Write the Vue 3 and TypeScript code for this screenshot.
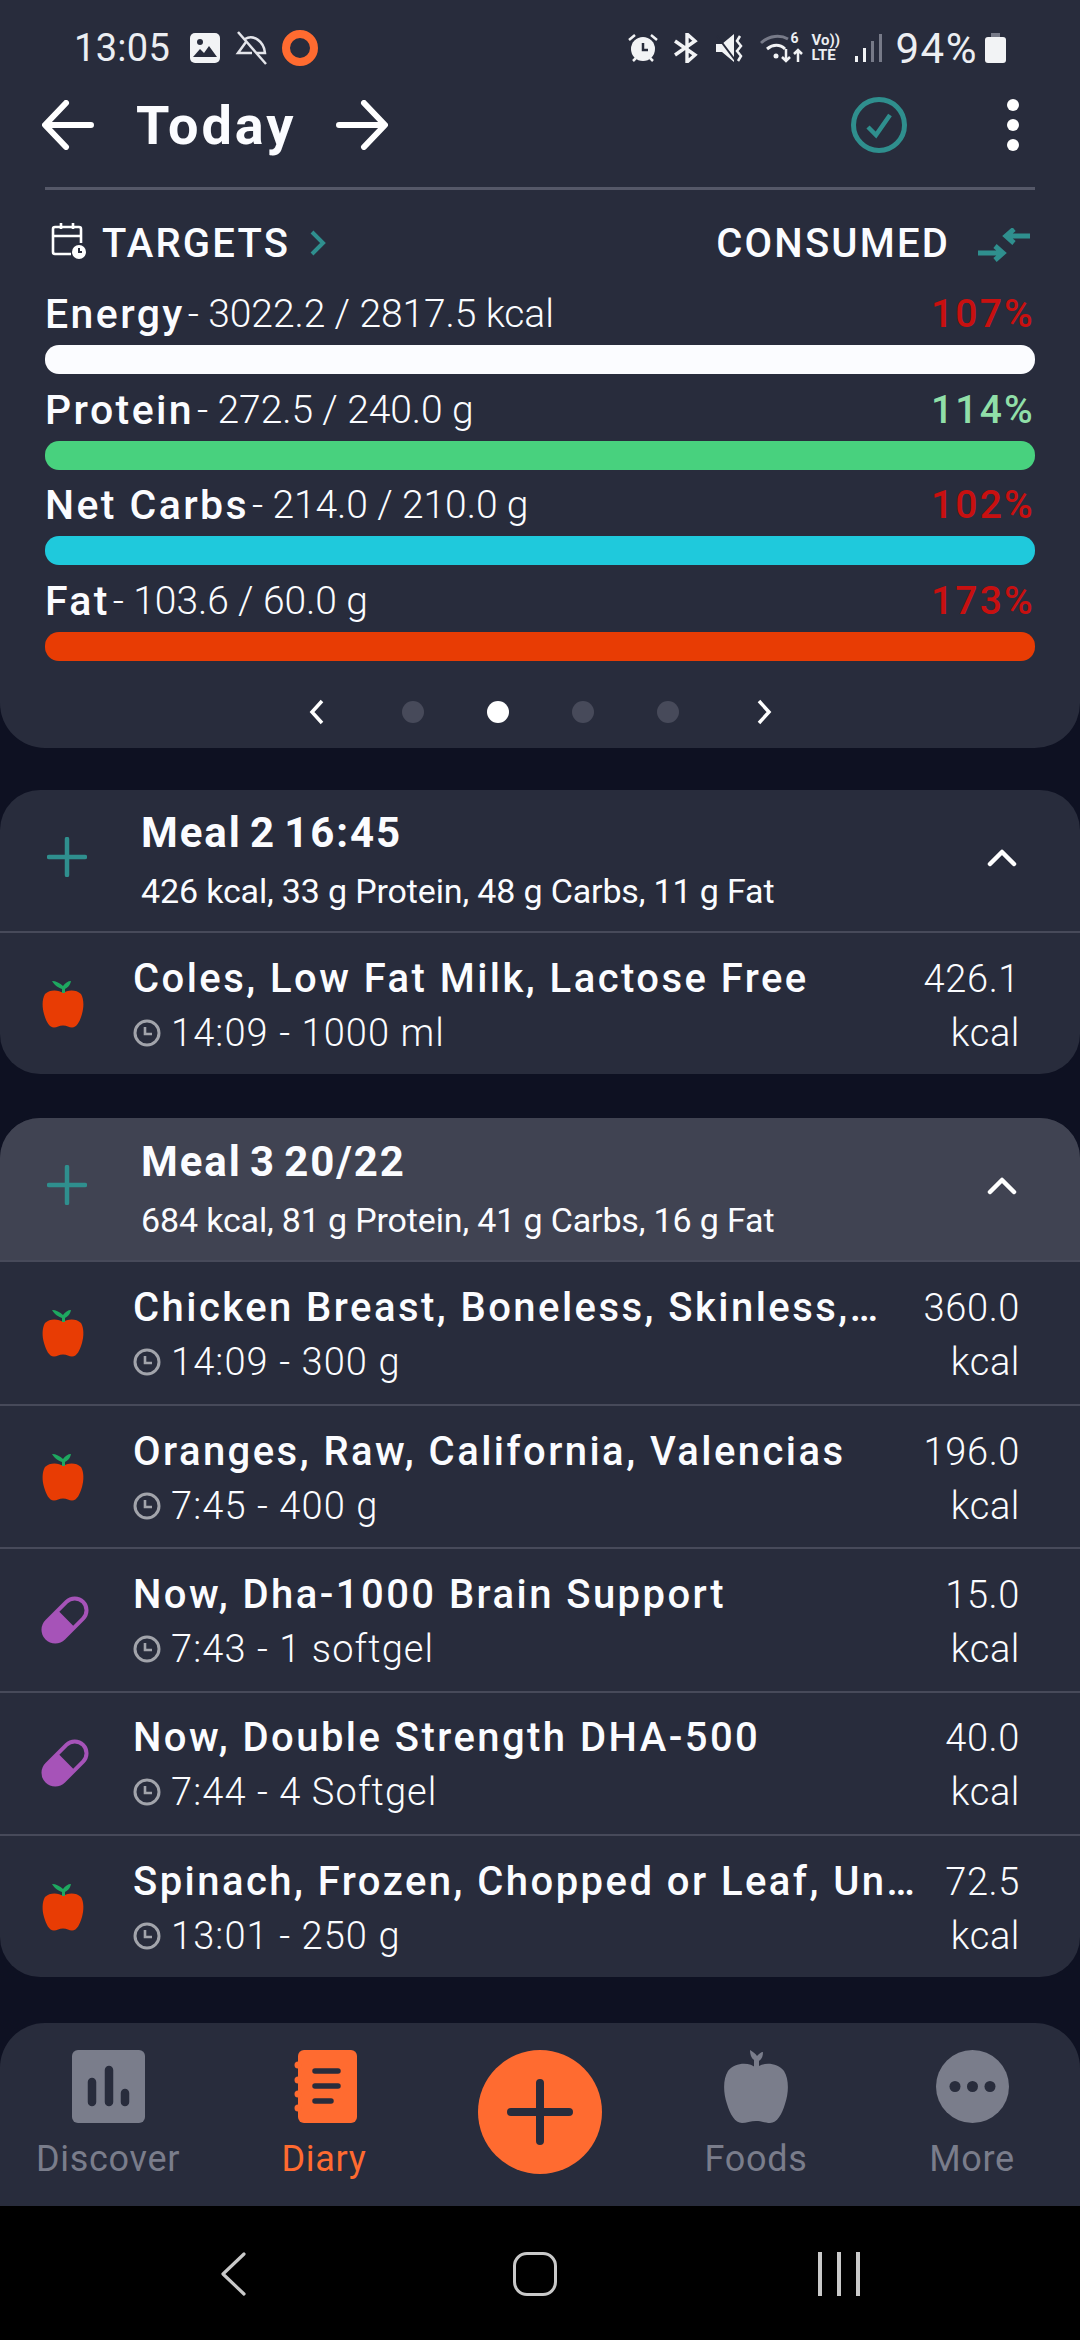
<template>
  <div class="screen">
    <section class="panel">
      <div class="status">
        <span class="time">13:05</span>
        <svg class="st-img" viewBox="0 0 30 30"><rect width="30" height="30" rx="5" fill="#f2f3f5"/><circle cx="10" cy="9" r="3" fill="#282c3c"/><path d="M3 24l7-8 4 4 5-7 8 11z" fill="#282c3c"/></svg>
        <svg class="st-bell" viewBox="0 0 34 34" fill="none" stroke="#e4e5ea" stroke-width="2.5"><path d="M3 1l28 32"/><path d="M10 8c8-5 19 2 20 14l-8 0M17 22H3l8-11"/></svg>
        <span class="ring"></span>
        <span class="grow"></span>
        <svg class="st-alarm" viewBox="0 0 30 30"><circle cx="15" cy="16" r="12" fill="#f2f3f5"/><path d="M1 7l6-5M29 7l-6-5M5 28l3-3M25 28l-3-3" stroke="#f2f3f5" stroke-width="2.5"/><path d="M15 10v7h5" stroke="#282c3c" stroke-width="2.5" fill="none"/></svg>
        <svg class="st-bt" viewBox="0 0 27 30" fill="none" stroke="#f2f3f5" stroke-width="3.4"><path d="M2 8l20 14-8 7V1l8 7L2 22"/></svg>
        <svg class="st-mute" viewBox="0 0 30 30"><path d="M1 11h6L19 1v28L7 19H1z" fill="#f2f3f5"/><path d="M2 3l18 24" stroke="#282c3c" stroke-width="2"/><path d="M25 3l-3 5 4 5-4 5 4 5-3 5" stroke="#f2f3f5" stroke-width="2.5" fill="none"/></svg>
        <svg class="st-wifi" viewBox="0 0 45 32" fill="none"><path d="M1 11c8-8 20-8 27-4" stroke="#777a88" stroke-width="3"/><path d="M7 17c6-5 13-5 18 0" stroke="#f2f3f5" stroke-width="3"/><circle cx="16" cy="24" r="2.5" fill="#f2f3f5"/><path d="M26 17v12m-4-4l4 4 4-4M38 30V18m-4 4l4-4 4 4" stroke="#f2f3f5" stroke-width="2.5"/></svg>
        <span class="wifi-six">6</span>
        <span class="volte"><span>Vo))</span><span>LTE</span></span>
        <svg class="st-signal" viewBox="0 0 27 30"><rect x="0" y="23" width="3" height="6" fill="#f2f3f5"/><rect x="8" y="15" width="3" height="14" fill="#f2f3f5"/><rect x="16" y="8" width="3" height="21" fill="#777a88"/><rect x="24" y="1" width="3" height="28" fill="#777a88"/></svg>
        <span class="batt-text">94%</span>
        <svg class="st-batt" viewBox="0 0 21 30"><rect x="6" y="0" width="9" height="4" fill="#777a88"/><rect x="0" y="4" width="21" height="26" rx="3" fill="#f2f3f5"/></svg>
      </div>

      <div class="toolbar">
        <svg class="arrow" viewBox="0 0 52 50" fill="none" stroke="#fff" stroke-width="6" stroke-linecap="round" stroke-linejoin="round"><path d="M49 25H4M24 3L3 25l21 22"/></svg>
        <span class="today">Today</span>
        <svg class="arrow arrow-r" viewBox="0 0 52 50" fill="none" stroke="#fff" stroke-width="6" stroke-linecap="round" stroke-linejoin="round"><path d="M3 25h45M28 3l21 22-21 22"/></svg>
        <span class="grow"></span>
        <svg class="check" viewBox="0 0 56 56" fill="none" stroke="#2f8f8e"><circle cx="28" cy="28" r="25.5" stroke-width="5"/><path d="M17 30l8 8 14-20" stroke-width="4.5"/></svg>
        <span class="kebab"><i></i><i></i><i></i></span>
      </div>
      <div class="rule"></div>

      <div class="target-row">
        <svg class="cal" viewBox="0 0 36 38" fill="none" stroke="#fff" stroke-width="2.6"><path d="M20 32H4a2 2 0 0 1-2-2V7a2 2 0 0 1 2-2h24a2 2 0 0 1 2 2v14M2 14h28M10 1v6M22 1v6"/><circle cx="28" cy="30" r="7" fill="#fff" stroke="none"/><path d="M28 26v4h3" stroke="#282c3c" stroke-width="2"/></svg>
        <span class="target-label">TARGETS</span>
        <svg class="target-chev" viewBox="0 0 17 26" fill="none" stroke="#2f8f8e" stroke-width="4"><path d="M3 2l11 11L3 24"/></svg>
        <span class="grow"></span>
        <span class="target-label">CONSUMED</span>
        <svg class="swap" viewBox="0 0 52 34" fill="none" stroke="#2f8f8e" stroke-width="5"><path d="M52 8H28M36 1l-8 7 8 7" /><path d="M0 25h24M17 18l8 7-8 7"/></svg>
      </div>

      <div v-for="stat in stats" :key="stat.name" class="stat">
        <div class="stat-text">
          <span class="stat-name">{{ stat.name }}</span><span class="stat-val">- {{ stat.value }}</span>
          <span class="grow"></span>
          <span class="stat-pct" :class="{ ok: stat.ok }">{{ stat.pct }}</span>
        </div>
        <div class="bar" :style="{ background: stat.color }"></div>
      </div>

      <div class="pager">
        <svg class="pager-chev" viewBox="0 0 16 26" fill="none" stroke="#fff" stroke-width="3.5"><path d="M13 2L3 13l10 11"/></svg>
        <span class="dot"></span>
        <span class="dot active"></span>
        <span class="dot"></span>
        <span class="dot"></span>
        <svg class="pager-chev" viewBox="0 0 16 26" fill="none" stroke="#fff" stroke-width="3.5"><path d="M3 2l10 11L3 24"/></svg>
      </div>
    </section>

    <section v-for="meal in meals" :key="meal.title" class="meal">
      <div class="meal-head" :class="{ selected: meal.selected }">
        <svg class="meal-plus" viewBox="0 0 40 40" stroke="#2f8f8e" stroke-width="4.5" stroke-linecap="round"><path d="M20 2v36M2 20h36"/></svg>
        <div class="meal-info">
          <div class="meal-title">{{ meal.title }}</div>
          <div class="meal-sub">{{ meal.summary }}</div>
        </div>
        <svg class="meal-chev" viewBox="0 0 30 18" fill="none" stroke="#fff" stroke-width="4.5" stroke-linecap="round" stroke-linejoin="round"><path d="M3 15L15 3l12 12"/></svg>
      </div>
      <div v-for="item in meal.items" :key="item.name" class="item">
        <svg v-if="item.kind === 'food'" class="item-icon" viewBox="0 0 42 48">
          <path d="M21 13C17 10 8 9 3 14C0 19 0 27 2 34C4 41 7 47.500 12 47.500C15 47.500 17 45.500 21 45.500C25 45.500 27 47.500 30 47.500C35 47.500 38 41 40 34C42 27 42 19 39 14C34 9 25 10 21 13Z" fill="#e83c04"/>
          <path d="M20 13V9C17 8 13 6 10 1C14 1 18 3 21 6C23 3 26 1 29 1C28 6 25 8 23 9V13Z" fill="#1ea860"/>
        </svg>
        <svg v-else class="item-icon pill" viewBox="-3 -3 54 54">
          <g transform="rotate(-45 24 24)">
            <rect x="-7" y="8.5" width="62" height="31" rx="15.5" fill="#a653b8"/>
            <path d="M26 13H39.5a11 11 0 0 1 0 22H26Z" fill="#282c3c"/>
          </g>
        </svg>
        <div class="item-info">
          <div class="item-name">{{ item.name }}</div>
          <div class="item-sub">
            <svg class="clock" viewBox="0 0 28 28" fill="none" stroke="#a2a4ab" stroke-width="3"><circle cx="14" cy="14" r="12"/><path d="M12 8v7h7" stroke-width="2.6"/></svg>
            <span>{{ item.detail }}</span>
          </div>
        </div>
        <div class="item-kcal">
          <div>{{ item.kcal }}</div>
          <div>kcal</div>
        </div>
      </div>
    </section>

    <nav class="tabs">
      <div class="tab">
        <svg class="tab-icon" viewBox="0 0 73 73"><rect width="73" height="73" rx="6" fill="#7a7d8b"/><path d="M20 32v20M37 20v32M53 43v9" stroke="#282c3c" stroke-width="8.5" stroke-linecap="round"/></svg>
        <span>Discover</span>
      </div>
      <div class="tab on">
        <svg class="tab-icon" viewBox="0 0 73 73"><rect x="10" y="0" width="59" height="73" rx="6" fill="#ff6b30"/><path d="M10 15v.1M10 30v.1M10 44v.1M10 58v.1" stroke="#ff6b30" stroke-width="7" stroke-linecap="round"/><path d="M27 21h23M27 36h23M27 51h16" stroke="#282c3c" stroke-width="5.500" stroke-linecap="round"/></svg>
        <span>Diary</span>
      </div>
      <div class="fab">
        <svg viewBox="0 0 66 66" stroke="#282c3c" stroke-width="8" stroke-linecap="round"><path d="M33 4v58M4 33h58"/></svg>
      </div>
      <div class="tab">
        <svg class="tab-icon" viewBox="0 0 73 73"><path d="M36 18C30 12 15 12 8 21C3 29 3 42 7 54C10 64 15 73 22 73C26 73 31 71 36 71C41 71 46 73 50 73C57 73 62 64 65 54C69 42 69 29 64 21C57 12 42 12 36 18Z" fill="#7a7d8b"/><path d="M34 18V10C31 8 30 4 30 0C33 2 36 4 37 6C39 4 41 2 43 2C43 6 42 9 39 11V18Z" fill="#7a7d8b"/></svg>
        <span>Foods</span>
      </div>
      <div class="tab">
        <svg class="tab-icon" viewBox="0 0 73 73"><circle cx="36.5" cy="36.5" r="36.5" fill="#7a7d8b"/><circle cx="19" cy="36.5" r="5.5" fill="#282c3c"/><circle cx="36.5" cy="36.5" r="5.5" fill="#282c3c"/><circle cx="54" cy="36.5" r="5.5" fill="#282c3c"/></svg>
        <span>More</span>
      </div>
    </nav>

    <div class="sysnav">
      <svg class="sys-back" viewBox="0 0 26 44" fill="none" stroke="#c9c9c9" stroke-width="3.2" stroke-linecap="round" stroke-linejoin="round"><path d="M24 2L3 22l21 20"/></svg>
      <span class="sys-home"></span>
      <span class="sys-recent"><i></i><i></i><i></i></span>
    </div>
  </div>
</template>

<script setup lang="ts">
interface Stat {
  name: string;
  value: string;
  pct: string;
  color: string;
  ok?: boolean;
}

interface Item {
  name: string;
  detail: string;
  kcal: string;
  kind: 'food' | 'supplement';
}

interface Meal {
  title: string;
  summary: string;
  selected?: boolean;
  items: Item[];
}

const stats: Stat[] = [
  { name: 'Energy', value: '3022.2 / 2817.5 kcal', pct: '107%', color: '#fbfcff' },
  { name: 'Protein', value: '272.5 / 240.0 g', pct: '114%', color: '#48d17e', ok: true },
  { name: 'Net Carbs', value: '214.0 / 210.0 g', pct: '102%', color: '#1fc9dc' },
  { name: 'Fat', value: '103.6 / 60.0 g', pct: '173%', color: '#e83c04' },
];

const meals: Meal[] = [
  {
    title: 'Meal 2 16:45',
    summary: '426 kcal, 33 g Protein, 48 g Carbs, 11 g Fat',
    items: [
      { name: 'Coles, Low Fat Milk, Lactose Free', detail: '14:09 - 1000 ml', kcal: '426.1', kind: 'food' },
    ],
  },
  {
    title: 'Meal 3 20/22',
    summary: '684 kcal, 81 g Protein, 41 g Carbs, 16 g Fat',
    selected: true,
    items: [
      { name: 'Chicken Breast, Boneless, Skinless,…', detail: '14:09 - 300 g', kcal: '360.0', kind: 'food' },
      { name: 'Oranges, Raw, California, Valencias', detail: '7:45 - 400 g', kcal: '196.0', kind: 'food' },
      { name: 'Now, Dha-1000 Brain Support', detail: '7:43 - 1 softgel', kcal: '15.0', kind: 'supplement' },
      { name: 'Now, Double Strength DHA-500', detail: '7:44 - 4 Softgel', kcal: '40.0', kind: 'supplement' },
      { name: 'Spinach, Frozen, Chopped or Leaf, Un…', detail: '13:01 - 250 g', kcal: '72.5', kind: 'food' },
    ],
  },
];
</script>

<style>
body {
  background: #0e1122;
}
</style>

<style scoped>
.screen {
  width: 1080px;
  height: 2340px;
  overflow: hidden;
  background: #0e1122;
  color: #fbfcff;
  font-family: Roboto, "Noto Sans", sans-serif;
}

.grow {
  flex: 1;
}

svg {
  display: block;
  flex: none;
}

.panel {
  background: #282c3c;
  border-radius: 0 0 45px 45px;
  padding: 10px 45px 16px;
}

.status {
  display: flex;
  align-items: center;
  height: 76px;
  margin: 0 -45px;
  padding: 0 74px 0 74px;
  color: #eceef2;
}

.time {
  font-size: 38px;
  width: 116px;
  letter-spacing: 0.3px;
}

.st-img {
  width: 30px;
  height: 30px;
}

.st-bell {
  width: 34px;
  height: 34px;
  margin-left: 15px;
}

.ring {
  width: 36px;
  height: 36px;
  box-sizing: border-box;
  border: 8px solid #ff6b30;
  border-radius: 50%;
  margin-left: 13px;
}

.st-alarm {
  width: 30px;
  height: 30px;
}

.st-bt {
  width: 27px;
  height: 30px;
  margin-left: 15px;
}

.st-mute {
  width: 30px;
  height: 30px;
  margin-left: 15px;
}

.st-wifi {
  width: 45px;
  height: 32px;
  margin-left: 15px;
}

.wifi-six {
  font-size: 14px;
  font-weight: 700;
  margin: -20px 0 0 -14px;
  width: 14px;
}

.volte {
  display: flex;
  flex-direction: column;
  width: 32px;
  margin-left: 7px;
  font-size: 15px;
  font-weight: 700;
  line-height: 15px;
}

.st-signal {
  width: 27px;
  height: 30px;
  margin-left: 11px;
}

.batt-text {
  font-size: 42px;
  letter-spacing: 1.5px;
  margin-left: 14px;
}

.st-batt {
  width: 21px;
  height: 30px;
  margin-left: 7px;
}

.toolbar {
  display: flex;
  align-items: center;
  height: 78px;
}

.arrow {
  width: 52px;
  height: 50px;
  margin-left: -3px;
}

.arrow-r {
  margin-left: 40px;
}

.today {
  font-size: 54px;
  font-weight: 700;
  letter-spacing: 3px;
  margin-left: 42px;
}

.check {
  width: 56px;
  height: 56px;
}

.kebab {
  display: flex;
  flex-direction: column;
  gap: 8px;
  margin: 0 16px 0 100px;
}

.kebab i {
  display: block;
  width: 12px;
  height: 12px;
  border-radius: 50%;
  background: #fff;
}

.rule {
  height: 3px;
  margin-top: 23px;
  background: #555868;
}

.target-row {
  display: flex;
  align-items: center;
  height: 50px;
  margin-top: 28px;
}

.cal {
  width: 36px;
  height: 38px;
  margin: -4px 15px 0 6px;
}

.target-label {
  font-size: 40px;
  font-weight: 500;
  letter-spacing: 2.2px;
}

.target-chev {
  width: 17px;
  height: 26px;
  margin-left: 19px;
}

.swap {
  width: 52px;
  height: 34px;
  margin: 4px 5px 0 28px;
}

.stat {
  margin-bottom: 8.7px;
}

.target-row + .stat {
  margin-top: 19px;
}

.stat-text {
  display: flex;
  align-items: center;
  height: 54px;
  margin-bottom: 4px;
  font-size: 39px;
  white-space: pre;
}

.stat-name {
  font-size: 41px;
  font-weight: 500;
  letter-spacing: 2.4px;
  margin-right: 3px;
}

.stat-val {
  font-weight: 300;
  letter-spacing: -0.1px;
}

.stat-pct {
  color: #c81010;
  font-weight: 500;
  letter-spacing: 2.2px;
}

.stat-pct.ok {
  color: #90dfa8;
}

.bar {
  height: 29px;
  border-radius: 14px;
}

.pager {
  display: flex;
  align-items: center;
  justify-content: center;
  height: 40px;
  margin-top: 31px;
  gap: 63px;
}

.pager-chev {
  width: 16px;
  height: 26px;
  margin: 0 14px;
}

.dot {
  width: 22px;
  height: 22px;
  border-radius: 50%;
  background: #474a5a;
}

.dot.active {
  background: #fff;
}

.meal {
  margin-top: 42px;
  background: #282c3c;
  border-radius: 40px;
  overflow: hidden;
}

.meal + .meal {
  margin-top: 44px;
}

.meal-head {
  display: flex;
  align-items: center;
  height: 141px;
  padding: 0 63px 0 47px;
}

.meal-head.selected {
  background: #404352;
  height: 142px;
}

.meal-plus {
  width: 40px;
  height: 40px;
  margin-top: -8px;
}

.meal-info {
  flex: 1;
  margin-left: 54px;
  padding-top: 3px;
}

.meal-title {
  font-size: 42px;
  font-weight: 700;
  letter-spacing: 1.9px;
  word-spacing: -4px;
  line-height: 58px;
}

.meal-sub {
  font-size: 34px;
  letter-spacing: -0.15px;
  line-height: 58px;
  font-weight: 400;
}

.meal-chev {
  width: 30px;
  height: 18px;
  margin-top: -6px;
}

.item {
  display: flex;
  align-items: center;
  height: 141.4px;
  border-top: 2px solid #474a5a;
  padding: 0 60px 0 42px;
}

.item-icon {
  width: 42px;
  height: 48px;
}

.item-icon.pill {
  margin-left: -2px;
  margin-right: -6px;
  width: 50px;
}

.item-info {
  flex: 1;
  min-width: 0;
  margin-left: 49px;
  padding-top: 4px;
}

.item-name {
  font-size: 40px;
  font-weight: 500;
  line-height: 54px;
  letter-spacing: 2.45px;
  white-space: nowrap;
}

.item-sub {
  display: flex;
  align-items: center;
  gap: 10px;
  font-size: 38px;
  font-weight: 300;
  letter-spacing: 1.1px;
  line-height: 54px;
}

.clock {
  width: 28px;
  height: 28px;
}

.item-kcal {
  margin-left: 24px;
  padding-top: 4px;
  font-size: 38px;
  font-weight: 300;
  letter-spacing: 0.6px;
  line-height: 54px;
  text-align: right;
}

.tabs {
  display: grid;
  grid-template-columns: repeat(5, 1fr);
  height: 183px;
  margin-top: 46px;
  padding: 27px 0 0;
  box-sizing: border-box;
  background: #282c3c;
  border-radius: 45px 45px 0 0;
}

.tab {
  display: flex;
  flex-direction: column;
  align-items: center;
  color: #7a7d8b;
  font-size: 36px;
  letter-spacing: 0.7px;
}

.tab span {
  margin-top: 13px;
  line-height: 46px;
}

.tab.on {
  color: #ff6b30;
}

.tab-icon {
  width: 73px;
  height: 73px;
}

.fab {
  display: flex;
  align-items: center;
  justify-content: center;
  justify-self: center;
  width: 124px;
  height: 124px;
  border-radius: 50%;
  background: #ff6b30;
}

.fab svg {
  width: 66px;
  height: 66px;
}

.sysnav {
  display: flex;
  align-items: center;
  height: 135px;
  padding-bottom: 3px;
  background: #000;
}

.sys-back {
  width: 26px;
  height: 44px;
  margin-left: 220px;
}

.sys-home {
  width: 44px;
  height: 44px;
  box-sizing: border-box;
  border: 3.5px solid #c9c9c9;
  border-radius: 14px;
  margin-left: 267px;
}

.sys-recent {
  display: flex;
  gap: 15.5px;
  margin-left: 261px;
}

.sys-recent i {
  display: block;
  width: 3.5px;
  height: 44px;
  background: #c9c9c9;
}
</style>
